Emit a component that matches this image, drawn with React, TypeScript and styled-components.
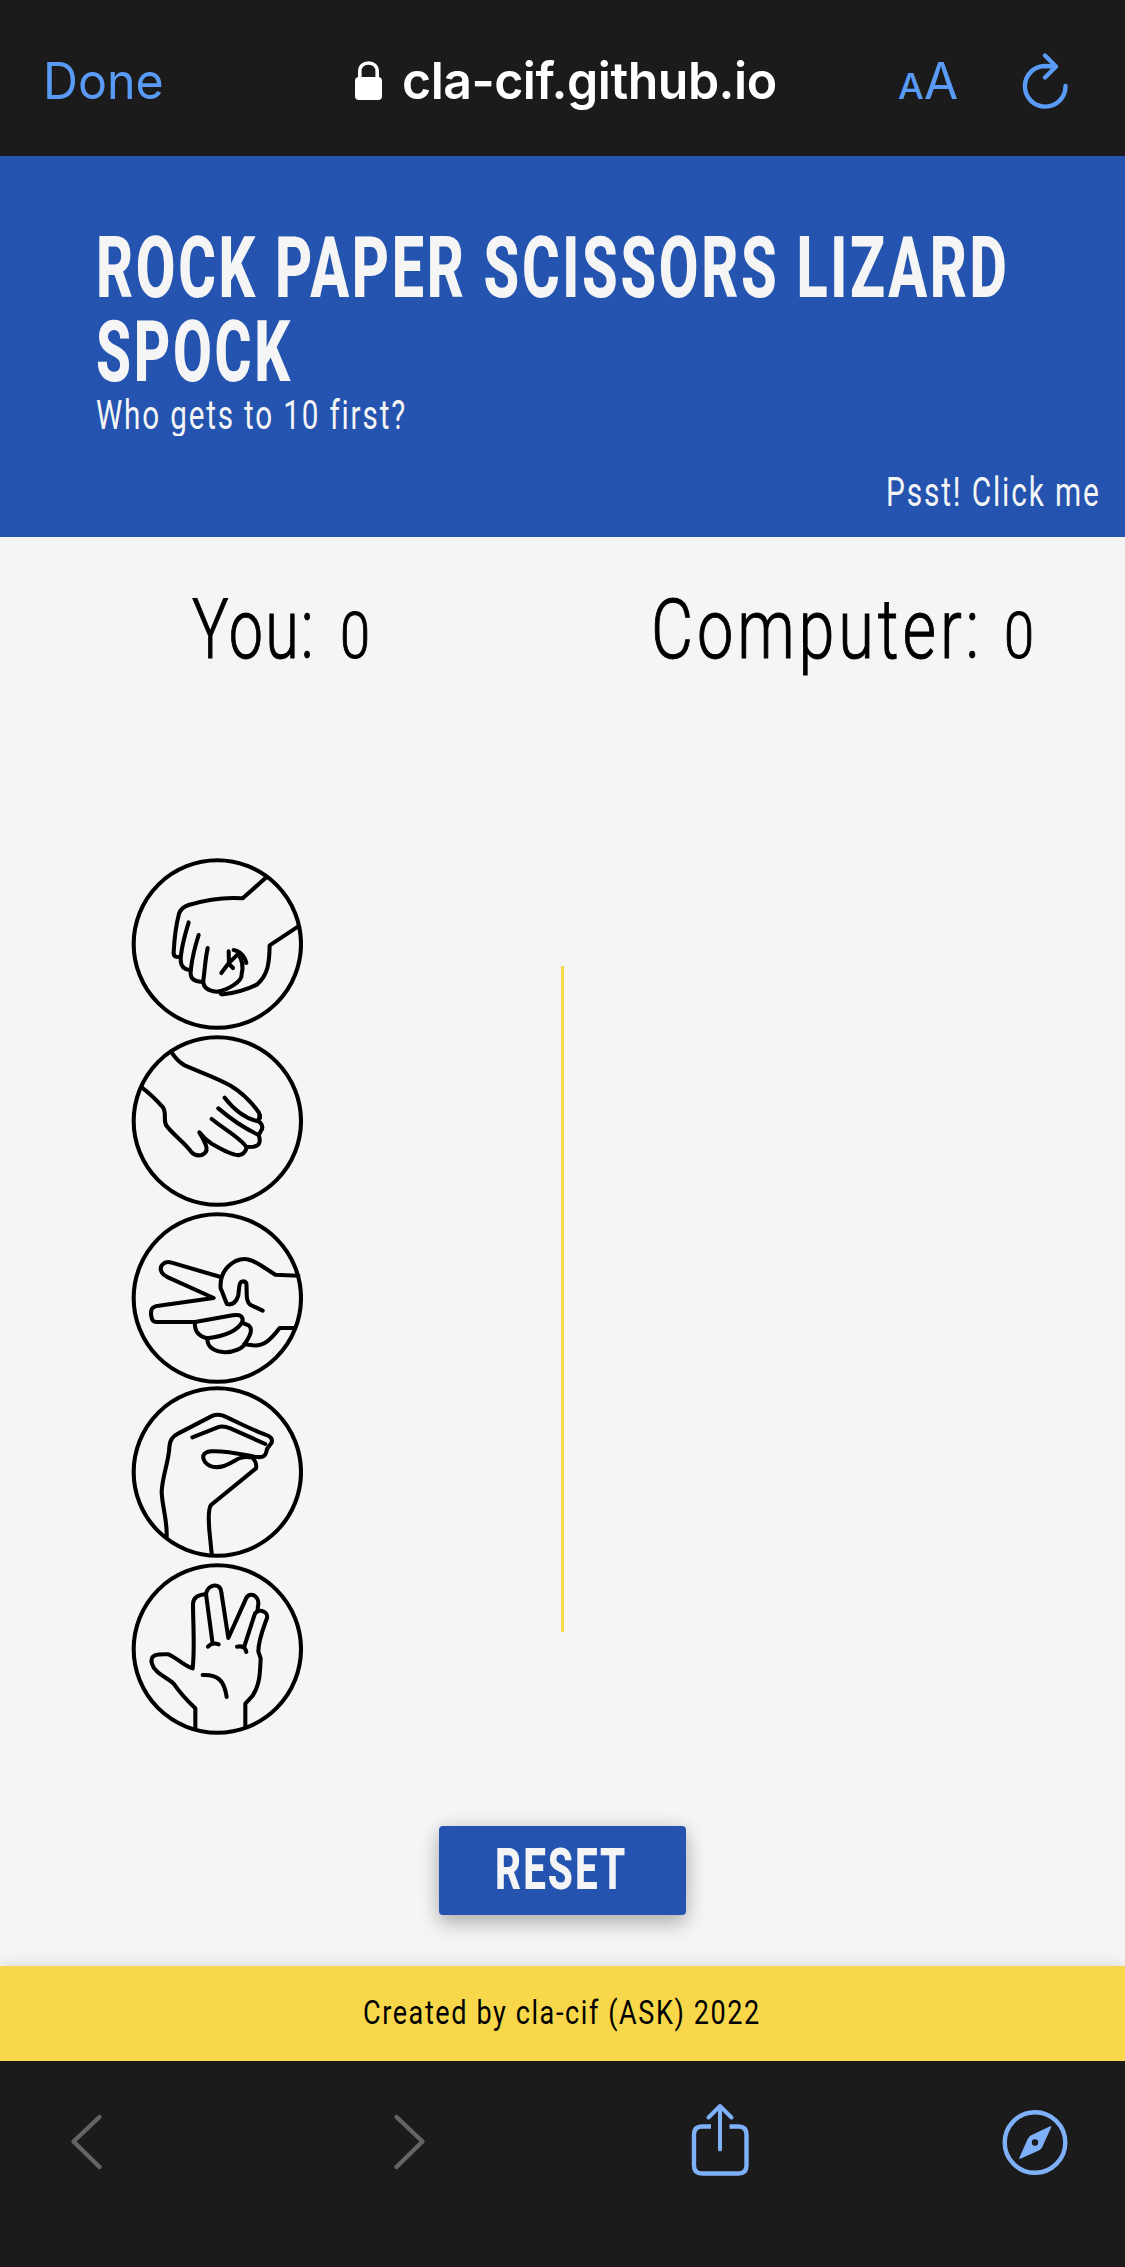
import React, { useLayoutEffect, useRef, useState } from "react";
import styled, { createGlobalStyle } from "styled-components";

const Global = createGlobalStyle`
  * { box-sizing: border-box; }
  body { margin: 0; background: #1b1b1b; }
`;

const Page = styled.div`
  width: 1125px;
  height: 2267px;
  display: flex;
  flex-direction: column;
  overflow: hidden;
  font-family: Roboto, "Liberation Sans", sans-serif;
`;

const TopBar = styled.div`
  height: 156px;
  flex: none;
  background: #1b1b1b;
  display: flex;
  align-items: flex-start;
  padding-top: 50px;
  font-family: Inter, "Liberation Sans", sans-serif;
`;

const DoneButton = styled.div`
  width: 355px;
  padding-left: 43px;
  color: #5a9bf8;
`;

const Address = styled.div`
  width: 543px;
  display: flex;
  color: #fff;
`;

const LockIcon = styled.svg`
  margin: 11px 20px 0 0;
`;

const TextSize = styled.div`
  width: 122px;
  display: flex;
  align-items: baseline;
  color: #5a9bf8;
`;

const Header = styled.header`
  height: 381px;
  flex: none;
  background: #2454b0;
  color: #f5f5f5;
  padding: 70px 26px 0 96px;
`;

const Title = styled.h1`
  margin: 0;
  font-weight: 800;
`;

const Tagline = styled.div`
  height: 52px;
  padding-top: 2px;
  overflow: hidden;
  margin-top: -10px;
`;

const Hint = styled.div`
  display: flex;
  justify-content: flex-end;
  margin-top: 32px;
`;

const Main = styled.main`
  height: 1429px;
  flex: none;
  background: #f5f5f5;
  color: #000;
  display: flex;
  flex-direction: column;
`;

const Scores = styled.div`
  display: grid;
  grid-template-columns: 459px 1fr;
  padding: 47px 0 0 192px;
  height: 320px;
  -webkit-text-stroke: 1px #000;
`;

const Score = styled.div<{ $gap: number }>`
  display: flex;
  align-items: baseline;
  gap: ${(p) => p.$gap}px;
`;

const Board = styled.div`
  display: grid;
  grid-template-columns: 131px 430px 3px;
  height: 969px;
`;

const Hands = styled.div`
  grid-column: 2;
  display: flex;
  flex-direction: column;
`;

const HandButton = styled.svg<{ $gap: number }>`
  display: block;
  flex: none;
  width: 172px;
  height: 172px;
  margin-top: ${(p) => p.$gap}px;
  fill: none;
  stroke: #000;
  stroke-width: 12.2;
  stroke-linecap: round;
  stroke-linejoin: round;
`;

const Divider = styled.div`
  width: 3px;
  height: 666px;
  margin-top: 109px;
  background: #f8d84a;
`;

const ResetButton = styled.button`
  width: 247px;
  height: 89px;
  margin: 0 0 0 439px;
  padding: 0 0 3px 56px;
  border: 0;
  border-radius: 4px;
  background: #2454b0;
  color: #f5f5f5;
  font-family: inherit;
  display: flex;
  align-items: center;
  box-shadow: 0 9px 20px rgba(0, 0, 0, 0.24), 0 0 18px rgba(0, 0, 0, 0.1);
`;

const Footer = styled.footer`
  height: 95px;
  flex: none;
  background: #f8d84a;
  color: #000;
  padding: 26px 0 0 363px;
  box-shadow: 0 0 16px rgba(0, 0, 0, 0.13);
`;

const BottomBar = styled.nav`
  flex: 1;
  position: relative;
  background: #1b1b1b;
  display: grid;
  grid-template-columns: 323px 298px 311px 68px;
  align-items: start;
  padding: 42px 0 0 69px;
`;

const BarIcon = styled.svg`
  fill: none;
  stroke-linecap: round;
  stroke-linejoin: round;
  stroke-width: 4.4;
  overflow: visible;
`;

const FitBox = styled.span<{ $size: number; $line: number; $weight: number; $spacing: number }>`
  display: block;
  font-size: ${(p) => p.$size}px;
  line-height: ${(p) => p.$line}px;
  height: ${(p) => p.$line}px;
  font-weight: ${(p) => p.$weight};
  letter-spacing: ${(p) => p.$spacing}px;
  white-space: nowrap;
`;

const FitInner = styled.span`
  display: inline-block;
  transform-origin: 0 0;
`;

interface FitProps {
  width: number;
  size: number;
  line: number;
  weight?: number;
  spacing?: number;
  children: string;
}

// Condenses a run of text horizontally so that it fills the given width.
function Fit({ width, size, line, weight = 400, spacing = 0, children }: FitProps) {
  const ref = useRef<HTMLSpanElement>(null);
  const [scale, setScale] = useState(1);
  useLayoutEffect(() => {
    if (ref.current) setScale(width / (ref.current.offsetWidth - spacing));
  }, [width, spacing, children]);
  return (
    <FitBox $size={size} $line={line} $weight={weight} $spacing={spacing} style={{ width }}>
      <FitInner ref={ref} style={{ transform: `scaleX(${scale})` }}>
        {children}
      </FitInner>
    </FitBox>
  );
}

const hands = [
  {
    name: "rock",
    gap: 0.7,
    cy: 281,
    paths: [
      "M440 81L369 144C310 139 260 148 207 164Q184 172 178 190C168 228 164 265 162 306Q161 317 170 319L181 320",
      "M207 216Q183 295 183 331Q184 357 213 360",
      "M237 254Q219 310 214 354C209 382 218 393 248 395",
      "M264 293C256 331 255 363 251 390Q249 420 291 424C322 420 367 395 366 372Q374 340 357 313",
      "M536 228L450 285C449 340 445 372 413 402C384 417 344 428 310 432Q300 433 302 423",
      "M305 368L327 339L356 310M342 299Q365 303 376 326L380 338M327 303L328 341L340 353",
    ],
  },
  {
    name: "paper",
    gap: 5,
    cy: 278,
    paths: [
      "M154 70Q174 100 195 111C243 132 292 149 333 172C365 191 393 218 418 253L421 268",
      "M66 177Q98 201 130 237C141 254 131 274 139 290C159 319 189 336 217 373Q227 384 246 380C269 371 264 353 239 312Q254 332 276 346C303 361 342 384 359 380Q374 377 380 361",
      "M276 272C310 300 368 333 380 356L401 355Q428 352 417 320",
      "M296 240C330 269 370 297 411 317Q420 320 424 307Q433 295 421 282",
      "M315 208C347 249 380 271 415 279L421 261",
    ],
  },
  {
    name: "scissors",
    gap: 5,
    cy: 278,
    paths: [
      "M303 215L156 172C133 164 116 184 127 202Q130 208 145 216L282 278L117 301C94 303 92 317 95 333Q97 350 110 350L226 350",
      "M536 211L467 208L423 180C395 162 377 155 348 167C317 184 300 212 303 249C311 266 315 282 322 296Q346 302 356 270C358 253 358 232 366 229Q376 226 380 234C383 263 376 287 393 299L429 316",
      "M226 350L339 330Q374 325 368 350C351 380 310 393 263 399Q222 389 226 350Z",
      "M263 399C261 455 363 450 379 410Q403 374 388 361L367 352",
      "M525 368L480 368C455 400 435 423 400 420L373 417",
    ],
  },
  {
    name: "lizard",
    gap: 2.3,
    cy: 276,
    paths: [
      "M141 469C143 420 127 378 126 335C128 287 148 242 149 202Q150 173 175 161L279 107Q294 101 310 107C355 127 398 150 437 164Q461 171 456 188L442 207C438 231 430 234 405 230C352 220 312 211 274 214C249 217 246 230 256 246C280 274 317 259 345 242Q369 228 389 232",
      "M218 172L294 142Q310 136 332 145L437 192",
      "M389 228C405 236 412 251 409 265L274 375C263 390 268 430 269 451L276 520",
    ],
  },
  {
    name: "spock",
    gap: 4.7,
    cy: 278,
    paths: [
      "M227 519L227 456C197 428 182 411 162 382C139 361 105 351 97 322C89 294 112 293 146 294C174 305 191 328 219 336C226 271 220 204 220 143Q221 117 256 114",
      "M279 262L259 114C264 81 304 78 305 108L326 245L378 129C390 100 422 121 415 149L414 160",
      "M373 273L404 177C410 153 447 164 442 185C431 216 416 251 416 286L423 306C421 346 422 382 399 418L377 442L377 510",
      "M249 356C293 354 314 371 321 422M265 271Q278 257 297 264M352 271Q376 266 380 287",
    ],
  },
];

export default function App() {
  return (
    <Page>
      <Global />
      <TopBar>
        <DoneButton>
          <Fit width={121} size={50} line={63}>Done</Fit>
        </DoneButton>
        <Address>
          <LockIcon width="27" height="39" viewBox="0 0 27 39">
            <rect x="0" y="16" width="27" height="23" rx="4" fill="#fff" />
            <path d="M4.8 18V10.5C4.8 5 8.3 2 13.5 2S22.2 5 22.2 10.5V18" fill="none" stroke="#fff" strokeWidth="3.6" />
          </LockIcon>
          <Fit width={375} size={51} line={62} weight={600} spacing={-0.5}>cla-cif.github.io</Fit>
        </Address>
        <TextSize>
          <Fit width={26} size={35} line={62} weight={500}>A</Fit>
          <Fit width={34} size={51} line={62}>A</Fit>
        </TextSize>
        <BarIcon width="50" height="56" viewBox="0 0 50 56" stroke="#5a9bf8">
          <path d="M45.5 36A20.3 20.3 0 1 1 25 16L34 16.5M25 5.5L36 16.5L25 27.5" />
        </BarIcon>
      </TopBar>

      <Header>
        <Title>
          <Fit width={911} size={85} line={84} weight={800} spacing={4}>ROCK PAPER SCISSORS LIZARD</Fit>
          <Fit width={194} size={85} line={84} weight={800} spacing={4}>SPOCK</Fit>
        </Title>
        <Tagline>
          <Fit width={309} size={40} line={60} weight={400} spacing={2.5}>Who gets to 10 first?</Fit>
        </Tagline>
        <Hint>
          <Fit width={213} size={40} line={50} weight={400} spacing={2.5}>Psst! Click me</Fit>
        </Hint>
      </Header>

      <Main>
        <Scores>
          <Score $gap={26}>
            <Fit width={122} size={84} line={92} weight={300} spacing={3}>You:</Fit>
            <Fit width={30} size={65} line={92} weight={300}>0</Fit>
          </Score>
          <Score $gap={25}>
            <Fit width={328} size={84} line={92} weight={300} spacing={5}>Computer:</Fit>
            <Fit width={30} size={65} line={92} weight={300}>0</Fit>
          </Score>
        </Scores>
        <Board>
          <Hands>
            {hands.map((h) => (
              <HandButton key={h.name} $gap={h.gap} viewBox={`34 ${h.cy - 258} 516 516`}>
                <circle cx="293" cy={h.cy} r="251" />
                {h.paths.map((d) => (
                  <path key={d} d={d} />
                ))}
              </HandButton>
            ))}
          </Hands>
          <Divider />
        </Board>
        <ResetButton>
          <Fit width={130} size={58} line={66} weight={800} spacing={3}>RESET</Fit>
        </ResetButton>
      </Main>

      <Footer>
        <Fit width={396} size={34} line={40} weight={400} spacing={2}>Created by cla-cif (ASK) 2022</Fit>
      </Footer>

      <BottomBar>
        <BarIcon width="34" height="76" viewBox="69 2103 34 76" stroke="#646464">
          <path d="M99.500 2117L73.500 2141.500L99.500 2167" />
        </BarIcon>
        <BarIcon width="34" height="76" viewBox="392 2103 34 76" stroke="#646464">
          <path d="M396.500 2117L422.500 2141.500L396.500 2167" />
        </BarIcon>
        <BarIcon width="60" height="76" viewBox="690 2103 60 76" stroke="#7fb1fb">
          <path d="M720 2106V2149.500M708.500 2117.500L720 2106L731.500 2117.500" strokeWidth="4" />
          <path d="M711 2126.500H702Q694 2126.500 694 2134.500V2165.500Q694 2173.500 702 2173.500H738.500Q746.500 2173.500 746.500 2165.500V2134.500Q746.500 2126.500 738.500 2126.500H729.500" strokeLinecap="butt" />
        </BarIcon>
        <BarIcon width="68" height="76" viewBox="1001 2103 68 76" stroke="#7fb1fb">
          <circle cx="1035" cy="2142.500" r="30.300" />
          <path
            d="M1050.500 2127L1031.500 2136Q1029.500 2137 1028.500 2139L1020 2158L1039 2149.500Q1040.500 2149 1041.500 2147ZM1035 2138.500A4 4 0 1 1 1035 2146.500A4 4 0 1 1 1035 2138.500Z"
            fill="#7fb1fb"
            fillRule="evenodd"
            strokeWidth="1.500"
          />
        </BarIcon>
      </BottomBar>
    </Page>
  );
}
